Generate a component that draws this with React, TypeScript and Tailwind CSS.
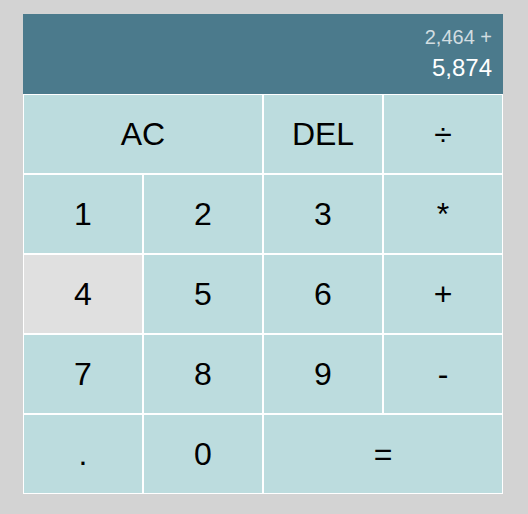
import React from "react";

const btn =
  "flex items-center justify-center border border-white bg-[#bcdcde] text-[32px] text-black cursor-pointer";

export default function App() {
  const keys: { label: string; span?: boolean; hover?: boolean }[] = [
    { label: "AC", span: true },
    { label: "DEL" },
    { label: "÷" },
    { label: "1" },
    { label: "2" },
    { label: "3" },
    { label: "*" },
    { label: "4", hover: true },
    { label: "5" },
    { label: "6" },
    { label: "+" },
    { label: "7" },
    { label: "8" },
    { label: "9" },
    { label: "-" },
    { label: "." },
    { label: "0" },
    { label: "=", span: true },
  ];
  return (
    <div
      className="min-h-screen w-full bg-[#d3d3d3] pl-[23px] pt-[14px]"
      style={{ fontFamily: '"Liberation Sans", Arial, sans-serif' }}
    >
      <div className="grid w-[480px] grid-cols-[repeat(4,120px)] grid-rows-[80px_repeat(5,80px)]">
        <div className="col-span-4 flex flex-col items-end justify-end gap-[9px] bg-[#4b7a8c] pb-[14px] pr-[11px]">
          <div className="text-[20px] leading-none text-white/75">2,464 +</div>
          <div className="text-[24px] leading-none text-white">5,874</div>
        </div>
        {keys.map((k) => (
          <div
            key={k.label}
            className={`${btn} ${k.span ? "col-span-2" : ""} ${k.hover ? "bg-[#e0e0e0]" : ""}`}
          >
            {k.label}
          </div>
        ))}
      </div>
    </div>
  );
}
